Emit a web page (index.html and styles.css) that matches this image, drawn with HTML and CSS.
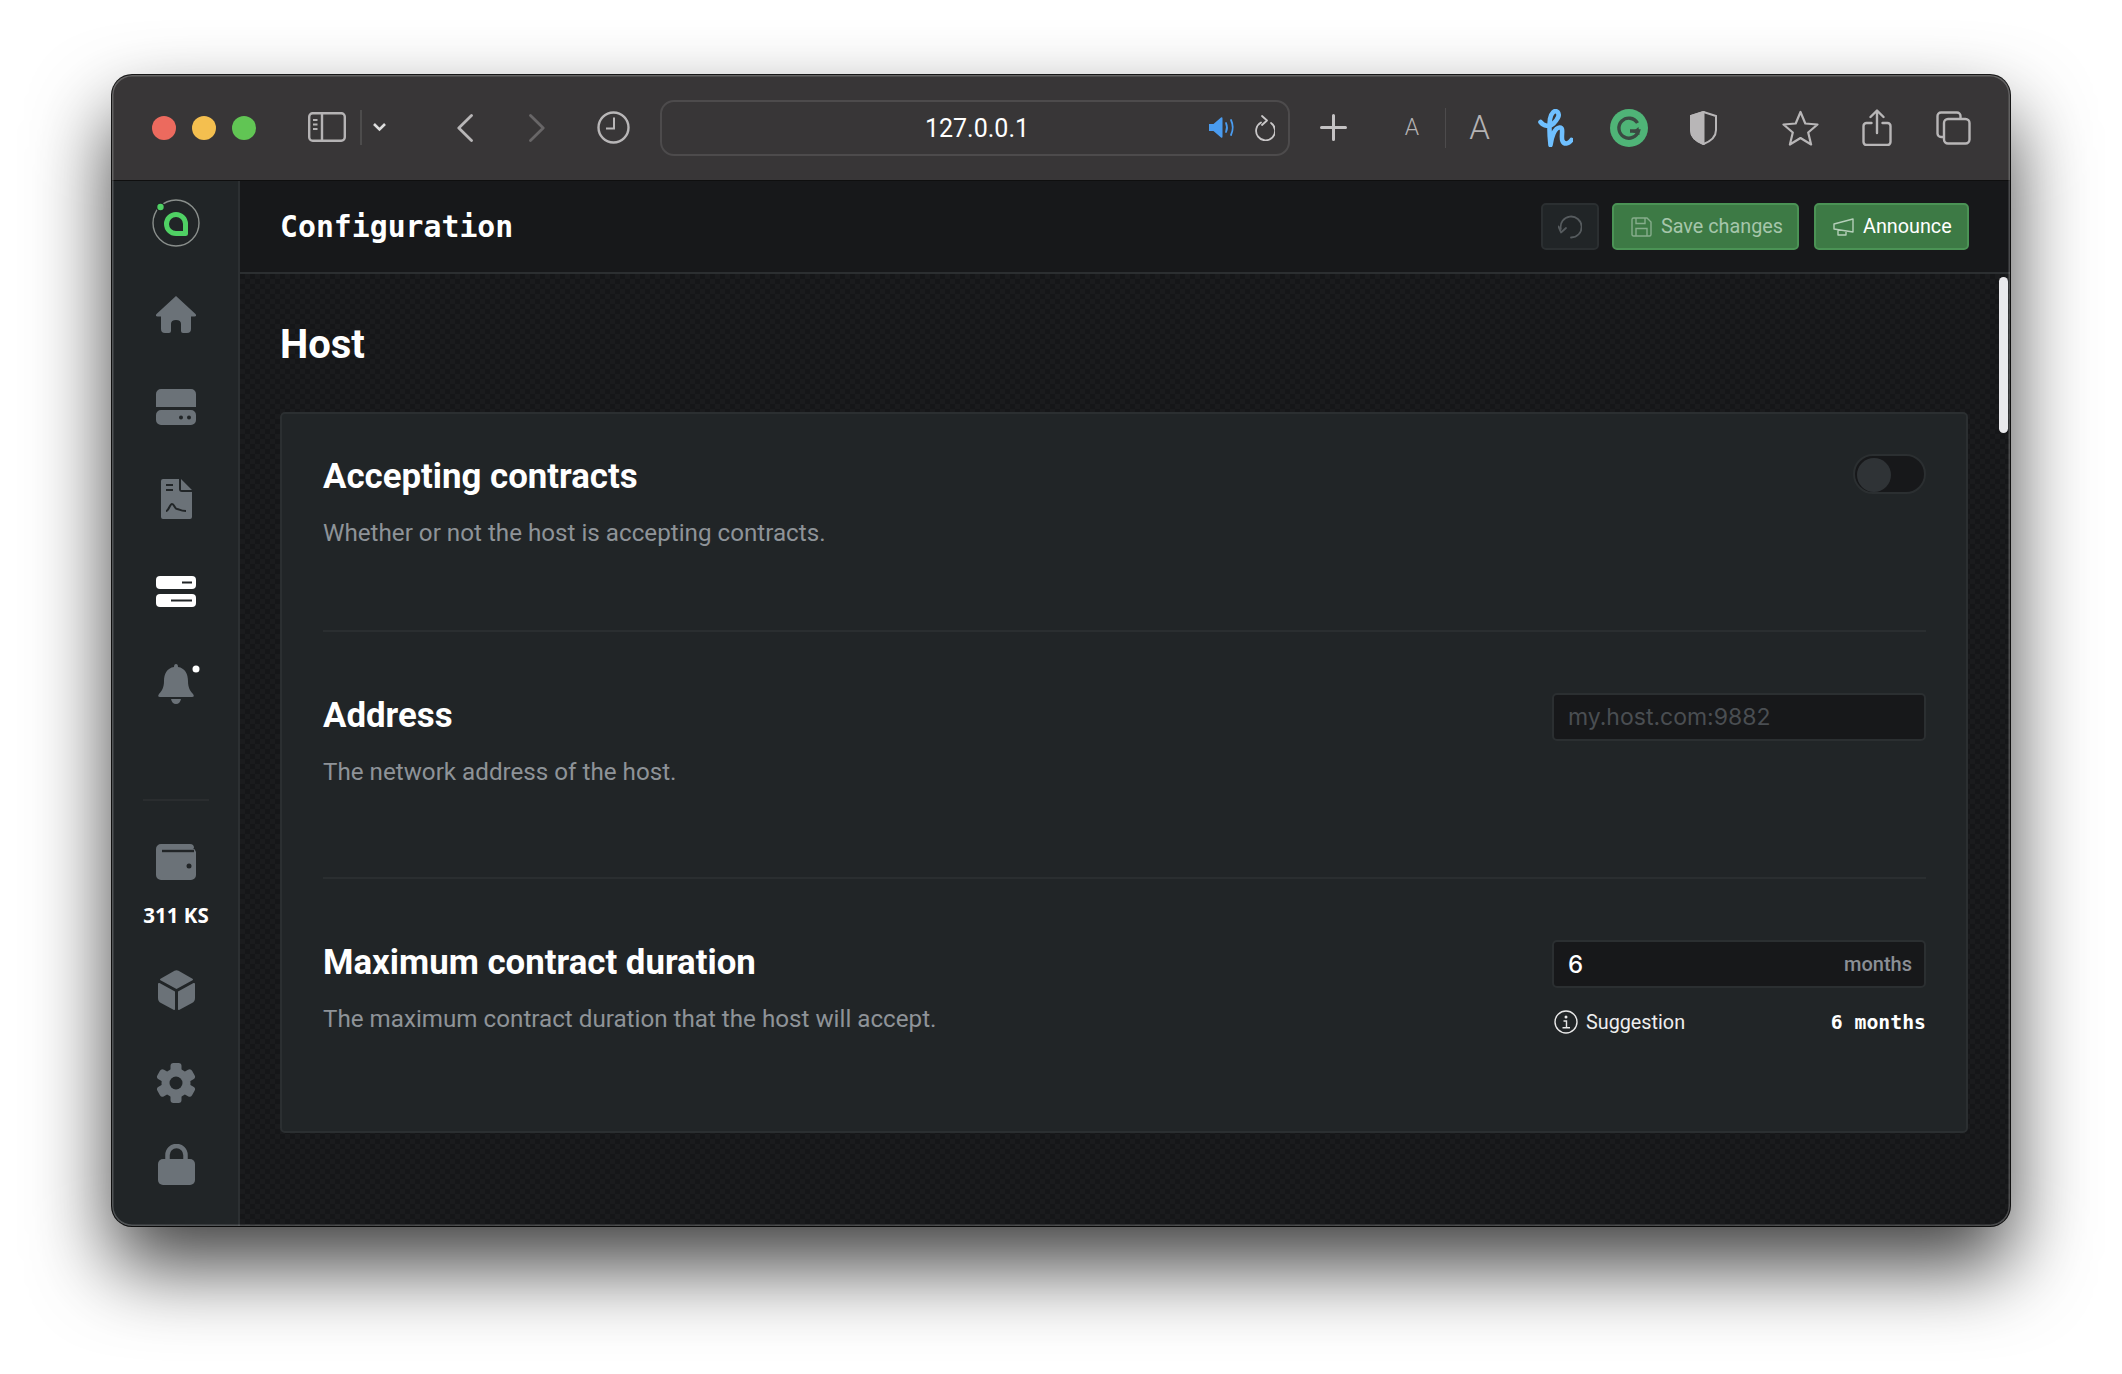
FILE: index.html
```html
<!DOCTYPE html>
<html lang="en">
<head>
<meta charset="utf-8">
<title>Configuration</title>
<link rel="stylesheet" href="styles.css">
</head>
<body>
<div class="window">
  <div class="toolbar">
    <div class="lights"><i class="light red"></i><i class="light yellow"></i><i class="light green"></i></div>
    <svg class="tb-side" viewBox="0 0 79 36" fill="none" stroke="#b5b3b4"><rect x="1.2" y="3.2" width="35.6" height="27.6" rx="3.5" stroke-width="2.4"/><path d="M14 3v28" stroke-width="2.4"/><path d="M5 10h4.5M5 14.500h4.500M5 19h4.500" stroke-width="2"/><path d="M53 0v35" stroke="#555" stroke-width="1.500"/><path d="M66 14l5.500 5.500L77 14" stroke-width="2.600" stroke="#ddd"/></svg>
    <svg class="tb-back" viewBox="0 0 16 28" fill="none" stroke="#b8b6b7" stroke-width="2.800" stroke-linecap="round" stroke-linejoin="round"><path d="M14.500 1.500L1.800 14l12.700 12.500"/></svg>
    <svg class="tb-fwd" viewBox="0 0 16 28" fill="none" stroke="#686667" stroke-width="2.800" stroke-linecap="round" stroke-linejoin="round"><path d="M1.500 1.500L14.200 14 1.500 26.500"/></svg>
    <svg class="tb-clock" viewBox="0 0 33 33" fill="none" stroke="#b8b6b7" stroke-width="2.400"><circle cx="16.500" cy="16.500" r="15"/><path d="M17 6.500v11h-8" stroke-width="2"/></svg>
    <div class="urlbar">
      <span class="url">127.0.0.1</span>
      <svg class="url-sound" viewBox="0 0 27 21"><path d="M0 7h4.500L12 .5q1.500-.8 1.500 1v18q0 1.800-1.500 1L4.500 14H0z" fill="#4a9cf0"/><path d="M17 6q2 4.500 0 9M22 3q3.500 7.500 0 15" fill="none" stroke="#4a9cf0" stroke-width="1.800" stroke-linecap="round"/></svg>
      <svg class="url-reload" viewBox="0 0 21 26" fill="none" stroke="#c9c7c8" stroke-width="1.800" stroke-linecap="round" stroke-linejoin="round"><path d="M7 7.500A9.500 9.500 0 1 0 17 8"/><path d="M8 1l5 4.500-5 4.500" /></svg>
    </div>
    <svg class="tb-plus" viewBox="0 0 27 27" stroke="#c4c2c3" stroke-width="3" stroke-linecap="round"><path d="M13.500 1.500v24M1.500 13.500h24"/></svg>
    <span class="font-small">A</span>
    <i class="font-sep"></i>
    <span class="font-big">A</span>
    <svg class="tb-honey" viewBox="0 0 35 38" fill="none" stroke="#6fc0ff" stroke-width="4.600" stroke-linecap="round" stroke-linejoin="round"><path d="M2.500 13c3 4 9 5.500 13 1.500 4.500-4.500 6.500-9 4-11.500-3-2.500-6.500 1-7.500 7-1 8-.5 17 .5 26 1-8 4-17 9-17.500 5-.5 1 9 3 13.500 1.500 3.500 6 3.500 9-1"/></svg>
    <svg class="tb-gram" viewBox="0 0 38 38"><circle cx="19" cy="19" r="19" fill="#4fb477"/><path d="M27.500 14A10 10 0 1 0 28.500 22H20" fill="none" stroke="#3a4a42" stroke-width="3.400"/><path d="M28.500 18l1 8-7-3z" fill="#3a4a42"/></svg>
    <svg class="tb-shield" viewBox="0 0 27 34" fill="none" stroke="#b8b6b7" stroke-width="2"><path d="M13.500 1L26 5v14c0 7-6 11.500-12.500 14C7 30.500 1 26 1 19V5z"/><path d="M13.500 1L1 5v14c0 7 6 11.500 12.500 14z" fill="#b8b6b7"/></svg>
    <svg class="tb-star" viewBox="0 0 37 36" fill="none" stroke="#b8b6b7" stroke-width="2.200" stroke-linejoin="round"><path d="M18.500 2l4.800 11.500 12.200 1-9.300 8 2.900 12-10.600-6.500-10.600 6.500 2.900-12-9.300-8 12.200-1z"/></svg>
    <svg class="tb-share" viewBox="0 0 30 37" fill="none" stroke="#b8b6b7" stroke-width="2.400" stroke-linecap="round" stroke-linejoin="round"><path d="M9.500 14H4.500a3 3 0 0 0-3 3v16a3 3 0 0 0 3 3h21a3 3 0 0 0 3-3V17a3 3 0 0 0-3-3h-5"/><path d="M15 24V2M8.500 8L15 1.500 21.500 8"/></svg>
    <svg class="tb-tabs" viewBox="0 0 35 34" fill="none" stroke="#b8b6b7" stroke-width="2.400"><path d="M7 26H5a3.500 3.500 0 0 1-3.500-3.500V5A3.500 3.500 0 0 1 5 1.500h16A3.500 3.500 0 0 1 24.500 5v3"/><rect x="8" y="8" width="25.500" height="24.500" rx="4"/></svg>
  </div>
  <div class="app">
    <aside class="sidebar">
      <div class="logo">
        <svg class="logo-svg" viewBox="0 0 50 50"><circle cx="25" cy="25" r="23" fill="none" stroke="#8a8f8c" stroke-width="1.400"/><circle cx="9.500" cy="9" r="4.500" fill="#212527"/><circle cx="9.500" cy="9" r="3.200" fill="#4fd164"/><path d="M25 16.500A9.500 9.500 0 0 0 25 35.500H34.500V26A9.500 9.500 0 0 0 25 16.500Z" fill="none" stroke="#4fd164" stroke-width="5" stroke-linejoin="round"/></svg>
      </div>
      <nav class="nav">
        <div class="nav-item"><svg class="i-home" viewBox="0 0 40 37"><path class="ic" d="M20 0L39.500 18q1.500 2-1 2.500H35V33q0 4-4 4h-4q-2 0-2-2v-7q0-4-5-4t-5 4v7q0 2-2 2H9q-4 0-4-4V20.500H1.500q-2.500-.5-1-2.500z"/></svg></div>
        <div class="nav-item"><svg class="i-disks" viewBox="0 0 40 36"><path class="ic" d="M5 0h30a5 5 0 0 1 5 5v13H0V5a5 5 0 0 1 5-5zM5 21h30a5 5 0 0 1 5 5v5a5 5 0 0 1-5 5H5a5 5 0 0 1-5-5v-5a5 5 0 0 1 5-5z"/><circle class="ic-cut" cx="25" cy="28.500" r="2"/><circle class="ic-cut" cx="33" cy="28.500" r="2"/></svg></div>
        <div class="nav-item"><svg class="i-doc" viewBox="0 0 31 40"><path class="ic" d="M2 0h16v10a3 3 0 0 0 3 3h10v25a2 2 0 0 1-2 2H2a2 2 0 0 1-2-2V2a2 2 0 0 1 2-2zM20 0l11 11H20z"/><path d="M5 6h7M5 11h7M5 32c3 0 3.500-7 6-7s2.500 5 5 5 2.500 2 9 2" fill="none" stroke="#212527" stroke-width="2"/></svg></div>
        <div class="nav-item"><svg class="i-hosts" viewBox="0 0 40 31"><rect class="ic-on" width="40" height="13" rx="4"/><rect class="ic-on" y="18" width="40" height="13" rx="4"/><path d="M26 6.500h10M15 24.500h21" stroke="#212527" stroke-width="2"/></svg></div>
        <div class="nav-item"><svg class="i-bell" viewBox="0 0 48 40"><path class="ic" d="M24 0q2 0 2 3c7 1 10 7 10 14 0 6 2 10 5 13q2 3-1 3H8q-3 0-1-3c3-3 5-7 5-13 0-7 3-13 10-14q0-3 2-3zM19 35h10q-1 5-5 5t-5-5z"/><circle class="ic-on" cx="44" cy="5" r="3.500"/></svg></div>
      </nav>
      <div class="side-bottom">
        <hr class="side-sep">
        <svg class="i-wallet" viewBox="0 0 40 36"><path class="ic" d="M5 0h29q4 0 4 4h-1q2 1 3 4v23a5 5 0 0 1-5 5H5a5 5 0 0 1-5-5V5a5 5 0 0 1 5-5z"/><path d="M6 7h32" stroke="#212527" stroke-width="2.400"/><circle class="ic-cut" cx="33" cy="22" r="2.500"/></svg>
        <div class="balance">311 KS</div>
        <svg class="i-box" viewBox="0 0 37 40"><path class="ic" d="M16.500.8q2-1 4 0l14 8q1 1 0 1.500L18.500 19 2.500 10.300q-1-.5 0-1.500zM0 14q0-1.500 1.500-1L17 21.500V39q0 1.500-1.500.7L3 33q-3-1.500-3-5zM37 14q0-1.500-1.500-1L20 21.500V39q0 1.500 1.500.7L34 33q3-1.500 3-5z"/></svg>
        <svg class="i-gear" viewBox="-20 -20 40 40"><circle class="ic" r="14.500"/><g class="ic"><rect x="-5.500" y="-20" width="11" height="10" rx="3"/><rect x="-5.500" y="-20" width="11" height="10" rx="3" transform="rotate(60)"/><rect x="-5.500" y="-20" width="11" height="10" rx="3" transform="rotate(120)"/><rect x="-5.500" y="-20" width="11" height="10" rx="3" transform="rotate(180)"/><rect x="-5.500" y="-20" width="11" height="10" rx="3" transform="rotate(240)"/><rect x="-5.500" y="-20" width="11" height="10" rx="3" transform="rotate(300)"/></g><circle class="ic-cut" r="6.500"/></svg>
        <svg class="i-lock" viewBox="0 0 37 41"><path d="M9.500 17V11a9 9 0 0 1 18 0v6" fill="none" stroke="#6b7278" stroke-width="4.500"/><rect class="ic" y="15" width="37" height="26" rx="5"/></svg>
      </div>
    </aside>
    <main class="main">
      <header class="header">
        <h2 class="page-title">Configuration</h2>
        <div class="actions">
          <button class="btn btn-ghost"><svg class="b-undo" viewBox="0 0 24 24" fill="none" stroke="#565b5e" stroke-width="1.800" stroke-linecap="round" stroke-linejoin="round"><path d="M13 22.500A10.500 10.500 0 1 0 2.800 14"/><path d="M.5 11.500L3 17.500 8 13"/></svg></button>
          <button class="btn btn-green btn-dim"><svg class="b-save" viewBox="0 0 21 20" fill="none" stroke="#86ad8c" stroke-width="1.400"><path d="M1 2.500A1.500 1.500 0 0 1 2.500 1H16l4 4v12.500a1.500 1.500 0 0 1-1.500 1.500h-16A1.500 1.500 0 0 1 1 17.500z"/><path d="M5 1v5.500h9V1M5 19v-7.500h11V19"/></svg><span>Save changes</span></button>
          <button class="btn btn-green btn-announce"><svg class="b-ann" viewBox="0 0 21 18" fill="none" stroke="#b5cfb9" stroke-width="1.400" stroke-linejoin="round"><path d="M1 6l19-5v13L1 11zM5 12v5h8v-3"/></svg><span>Announce</span></button>
        </div>
      </header>
      <div class="content">
        <h1 class="section-title">Host</h1>
        <section class="card">
          <div class="row row-first">
            <div class="row-text"><h3 class="row-title">Accepting contracts</h3><p class="row-desc">Whether or not the host is accepting contracts.</p></div>
            <div class="toggle"><i class="knob"></i></div>
          </div>
          <div class="row row-mid">
            <div class="row-text"><h3 class="row-title">Address</h3><p class="row-desc">The network address of the host.</p></div>
            <div class="control"><div class="field"><span class="placeholder">my.host.com:9882</span></div></div>
          </div>
          <div class="row row-last">
            <div class="row-text"><h3 class="row-title">Maximum contract duration</h3><p class="row-desc">The maximum contract duration that the host will accept.</p></div>
            <div class="control">
              <div class="field"><span class="value">6</span><span class="unit">months</span></div>
              <div class="suggest">
                <span class="suggest-label"><svg class="s-info" viewBox="0 0 24 24" fill="none" stroke="#e8e8e8" stroke-width="1.400"><circle cx="12" cy="12" r="11"/><path d="M9.500 11H12.500V17.500M8.500 17.800H16" /><circle cx="12" cy="7" r=".8" fill="#e8e8e8"/></svg>Suggestion</span>
                <span class="suggest-value">6 months</span>
              </div>
            </div>
          </div>
        </section>
      </div>
      <div class="scrollbar"></div>
    </main>
  </div>
</div>
</body>
</html>
```
FILE: styles.css
```css
* { box-sizing: border-box; }
html, body { margin: 0; height: 100%; }
body {
  background: #fff;
  padding: 75px 0 0 112px;
  overflow: hidden;
  font-family: Roboto, "Liberation Sans", sans-serif;
}
.window {
  position: relative;
  width: 1898px;
  height: 1151px;
  border-radius: 20px;
  display: flex;
  flex-direction: column;
  overflow: hidden;
  background: #17181a;
  box-shadow: 0 40px 80px rgba(0,0,0,.75), 0 0 0 1px #1a1a1a;
}
.window::after {
  content: "";
  position: absolute;
  inset: 0;
  border-radius: 20px;
  box-shadow: inset 0 0 0 1.500px rgba(255,255,255,.22);
  pointer-events: none;
}

/* toolbar */
.toolbar {
  height: 106px;
  flex: none;
  background: #383637;
  border-bottom: 1px solid #0f0f0f;
  display: flex;
  align-items: center;
  padding-left: 40px;
}
.toolbar svg { flex: none; display: block; }
.lights { display: flex; gap: 16px; }
.light { width: 24px; height: 24px; border-radius: 50%; display: block; }
.red { background: #ec6a5e; }
.yellow { background: #f4bf4f; }
.green { background: #61c554; }
.tb-side { width: 79px; height: 36px; margin-left: 52px; }
.tb-back { width: 16px; height: 28px; margin-left: 70px; }
.tb-fwd { width: 16px; height: 28px; margin-left: 56px; }
.tb-clock { width: 33px; height: 33px; margin-left: 52px; }
.urlbar {
  position: relative;
  width: 630px;
  height: 56px;
  margin-left: 30px;
  border: 2px solid #4d4b4c;
  border-radius: 14px;
  display: flex;
  align-items: center;
  justify-content: flex-end;
}
.url {
  position: absolute;
  left: 0;
  right: 0;
  text-align: center;
  padding: 2px 0 0 4px;
  color: #fff;
  font-size: 25px;
}
.url-sound { width: 27px; height: 21px; margin-right: 18px; }
.url-reload { width: 21px; height: 26px; margin-right: 13px; }
.tb-plus { width: 27px; height: 27px; margin-left: 30px; }
.font-small, .font-big { color: #b4b2b3; font-weight: 300; text-align: center; line-height: 1; }
.font-small { font-size: 23px; width: 16px; margin-left: 57px; }
.font-sep { width: 1px; height: 40px; background: #4d4b4c; margin-left: 25px; display: block; }
.font-big { font-size: 33px; width: 21px; margin-left: 23px; }
.tb-honey { width: 35px; height: 38px; margin-left: 48px; }
.tb-gram { width: 38px; height: 38px; margin-left: 37px; }
.tb-shield { width: 27px; height: 34px; margin-left: 42px; }
.tb-star { width: 37px; height: 36px; margin-left: 65px; }
.tb-share { width: 30px; height: 37px; margin-left: 43px; }
.tb-tabs { width: 35px; height: 34px; margin-left: 44px; }

/* app */
.app { flex: 1; display: flex; min-height: 0; }
.sidebar {
  width: 128px;
  flex: none;
  background: #212527;
  border-right: 2px solid #2c3032;
  display: flex;
  flex-direction: column;
  align-items: center;
  padding: 0 0 41px 2px;
}
.sidebar svg { display: block; flex: none; }
.logo { height: 87px; width: 100%; padding-bottom: 3px; display: flex; align-items: center; justify-content: center; }
.logo-svg { width: 50px; height: 50px; }
.nav { width: 100%; }
.nav-item { height: 92.500px; display: flex; align-items: center; justify-content: center; }
.ic { fill: #6b7278; }
.ic-cut { fill: #212527; }
.ic-on { fill: #fff; }
.i-home { width: 40px; height: 37px; }
.i-disks { width: 40px; height: 36px; }
.i-doc { width: 31px; height: 40px; }
.i-hosts { width: 40px; height: 31px; }
.i-bell { width: 48px; height: 40px; }
.side-bottom { margin-top: auto; width: 100%; display: flex; flex-direction: column; align-items: center; }
.side-sep { width: 66px; height: 2px; border: 0; margin: 0 0 43px; background: #2a2d2f; }
.i-wallet { width: 40px; height: 36px; }
.balance { margin-top: 22px; height: 26px; line-height: 26px; color: #fff; font-size: 20.500px; font-weight: 700; font-family: "Noto Sans", sans-serif; }
.i-box { width: 37px; height: 40px; margin-top: 42px; }
.i-gear { width: 40px; height: 40px; margin-top: 53px; }
.i-lock { width: 37px; height: 41px; margin-top: 41px; }

/* main */
.main { position: relative; flex: 1; min-width: 0; display: flex; flex-direction: column; }
.header {
  height: 93px;
  flex: none;
  background: #17181a;
  border-bottom: 2px solid #2c2f31;
  display: flex;
  align-items: center;
  justify-content: space-between;
  padding: 0 41px 0 40px;
}
.page-title {
  margin: 0;
  color: #fff;
  font-family: "DejaVu Sans Mono", monospace;
  font-size: 29.800px;
  font-weight: 700;
}
.actions { display: flex; gap: 15px; }
.btn {
  height: 47px;
  border-radius: 5px;
  font-family: inherit;
  font-size: 19.800px;
  display: flex;
  align-items: center;
  padding: 0;
}
.btn svg { display: block; flex: none; }
.btn-ghost { width: 58px; margin-right: -2px; justify-content: center; background: #212527; border: 2px solid #2b2f31; }
.btn-green { background: #3d7a45; border: 2px solid #4b9355; color: #fff; gap: 9px; padding-left: 17px; }
.btn-dim { width: 187px; color: #a6c6ab; }
.btn-announce { width: 155px; }
.b-undo { width: 24px; height: 24px; }
.b-save { width: 21px; height: 20px; }
.b-ann { width: 21px; height: 18px; }
.content {
  flex: 1;
  padding: 47px 42px 0 40px;
  min-height: 0;
  background-color: #17181a;
  background-image: repeating-conic-gradient(#1a1b1d 0 25%, #151618 0 50%);
  background-size: 10px 10px;
}
.section-title { margin: 0 0 43px; height: 48px; line-height: 48px; color: #fff; font-size: 40px; font-weight: 700; }
.card {
  height: 721px;
  background: #212527;
  border: 2px solid #2b2f31;
  border-radius: 5px;
  padding: 0 40px 0 41px;
}
.row { display: flex; justify-content: space-between; align-items: flex-start; }
.row-first { padding-top: 40px; height: 218px; border-bottom: 2px solid #2a2e30; }
.row-first .row-desc { margin-top: 19px; }
.row-mid { padding-top: 61px; height: 247px; border-bottom: 2px solid #2a2e30; }
.row-last { padding-top: 61px; }
.row-last .control { margin-top: 0; }
.row-title { margin: 0; height: 44px; line-height: 44px; color: #fff; font-size: 34.800px; font-weight: 700; }
.row-desc { margin: 19px 0 0; height: 32px; line-height: 32px; color: #8e9398; font-size: 24.200px; }
.toggle { width: 73px; height: 40px; border-radius: 20px; background: #17181a; border: 2px solid #2b2f31; padding: 2px; }
.knob { display: block; width: 34px; height: 34px; border-radius: 50%; background: #2f3336; }
.control { width: 374px; flex: none; margin-top: 0; }
.field {
  height: 48px;
  background: #17181a;
  border: 2px solid #2b2f31;
  border-radius: 5px;
  padding: 0 12px 0 14px;
  display: flex;
  align-items: center;
  justify-content: space-between;
}
.placeholder { color: #4a4e52; font-size: 23px; font-family: Inter, sans-serif; }
.value { color: #fff; font-size: 24px; font-family: Inter, sans-serif; font-weight: 500; }
.unit { color: #8a8f95; font-size: 20px; font-weight: 500; }
.suggest { margin-top: 19px; height: 30px; display: flex; align-items: center; justify-content: space-between; padding-left: 2px; }
.suggest-label { display: flex; align-items: center; gap: 8px; color: #eee; font-size: 19.800px; }
.s-info { width: 24px; height: 24px; display: block; }
.suggest-value { color: #fff; font-family: "DejaVu Sans Mono", monospace; font-size: 19.800px; font-weight: 700; }
.scrollbar { position: absolute; right: 2px; top: 96px; width: 9px; height: 156px; border-radius: 5px; background: #e9e9ec; }
```
